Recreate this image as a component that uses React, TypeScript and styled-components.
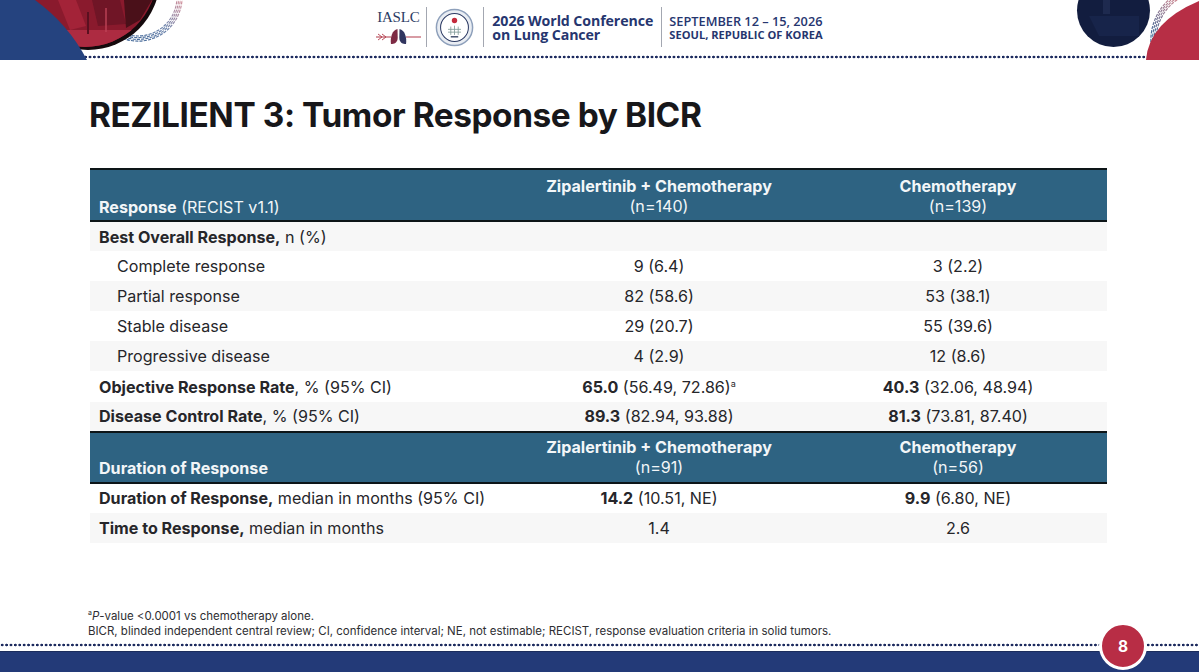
import React from "react";
import styled, { createGlobalStyle } from "styled-components";

const Global = createGlobalStyle`
  html, body { margin: 0; padding: 0; background: #fff; }
  #root { width: 1199px; height: 672px; overflow: hidden; }
`;

const dots = `radial-gradient(circle at center, #1c2a5e 0 1.25px, transparent 1.6px)`;

const Page = styled.div`
  width: 1199px;
  height: 672px;
  display: flex;
  flex-direction: column;
  position: relative;
  overflow: hidden;
  background: #fff;
  font-family: Inter, "Liberation Sans", sans-serif;
  color: #26262a;
`;

const Header = styled.header`
  height: 60px;
  flex: none;
  display: flex;
  justify-content: space-between;
  background-image: ${dots};
  background-size: 4.4px 4px;
  background-repeat: repeat-x;
  background-position: 0 55px;
`;

const Corner = styled.svg`
  display: block;
  flex: none;
  width: 190px;
  height: 60px;
`;

const Brand = styled.div`
  display: flex;
  align-items: center;
  height: 48px;
  margin-top: 3px;
`;

const Societies = styled.div`
  width: 50px;
  flex: none;
  box-sizing: border-box;
  padding-right: 6px;
  display: flex;
  flex-direction: column;
  align-items: center;
`;

const SocietyName = styled.div`
  font-family: "Liberation Serif", serif;
  font-size: 15px;
  line-height: 16px;
  color: #2b3a63;
  letter-spacing: -0.2px;
  margin-bottom: 3px;
`;

const Rule = styled.div`
  width: 1px;
  height: 40px;
  background: #a3a7b1;
  flex: none;
`;

const Seal = styled.svg`
  display: block;
  width: 39px;
  height: 39px;
  margin: 0 9px 0 8px;
  flex: none;
`;

const ConfName = styled.div`
  font-family: "Open Sans", sans-serif;
  font-weight: 700;
  font-size: 14.2px;
  line-height: 14px;
  letter-spacing: -0.1px;
  color: #26366f;
  width: 162px;
  margin: 2px 7px 0 8px;
  white-space: nowrap;
`;

const ConfDate = styled.div`
  font-family: "Open Sans", sans-serif;
  font-size: 12.75px;
  line-height: 14px;
  font-weight: 600;
  color: #26366f;
  margin: 2px 0 0 7px;
  white-space: nowrap;
`;

const ConfPlace = styled.span`
  font-size: 11.1px;
  font-weight: 700;
  display: block;
`;

const Main = styled.main`
  flex: 1;
  padding: 0 92px 0 90px;
  display: flex;
  flex-direction: column;
`;

const Title = styled.h1`
  margin: 34px 0 32px -1px;
  font-size: 33.4px;
  line-height: 42px;
  font-weight: 700;
  color: #17171a;
  letter-spacing: -0.42px;
  white-space: nowrap;
`;

const Table = styled.table`
  width: 1017px;
  border-collapse: collapse;
  table-layout: fixed;
  font-size: 16.1px;
`;

const Band = styled.tr<{ $tight?: boolean }>`
  background: #2e6382;
  color: #f2f6f8;
  th {
    padding: ${(p) => (p.$tight ? "3.5px 0 4.5px" : "4.5px 0 4.5px")};
    border-top: 2px solid #0d1518;
    border-bottom: 2px solid #0d1518;
    vertical-align: bottom;
    line-height: 20px;
    font-weight: 400;
    text-align: center;
    box-sizing: content-box;
    height: 41px;
    white-space: nowrap;
  }
  th:first-child {
    text-align: left;
    padding-left: 9px;
    padding-bottom: 3.5px;
  }
`;

const Row = styled.tr<{ $shade?: boolean; $indent?: boolean }>`
  background: ${(p) => (p.$shade ? "#f7f7f7" : "#ffffff")};
  td {
    height: 30.1px;
    padding: 0;
    text-align: center;
    box-sizing: border-box;
    white-space: nowrap;
  }
  td:first-child {
    text-align: left;
    padding-left: ${(p) => (p.$indent ? "27px" : "9px")};
  }
`;

const Sup = styled.sup`
  font-size: 9px;
  line-height: 0;
`;

const Notes = styled.div`
  margin-top: auto;
  margin-bottom: 4px;
  margin-left: -2px;
  font-size: 11.47px;
  line-height: 15px;
  color: #2e2e32;
  white-space: nowrap;
  sup { font-size: 7px; line-height: 0; }
`;

const Footer = styled.footer`
  height: 29px;
  flex: none;
  background-image: ${dots};
  background-size: 4.4px 4px;
  background-repeat: repeat-x;
  background-position: 0 0;
  display: flex;
  align-items: flex-end;
`;

const FooterBand = styled.div`
  flex: 1;
  height: 21px;
  background: #233a78;
  border-top: 1px solid #1b2c5c;
  box-sizing: border-box;
`;

const Badge = styled.div`
  position: absolute;
  left: 1099px;
  top: 622px;
  width: 48px;
  height: 48px;
  box-sizing: border-box;
  border-radius: 50%;
  border: 3px solid #fff;
  background: #b82d45;
  color: #fff;
  font-weight: 700;
  font-size: 15.5px;
  display: flex;
  align-items: center;
  justify-content: center;
`;

const hatch = (cx: number, cy: number, r: number, c: string) =>
  [0, 1.7, 3.4, 5.1].map((d) => (
    <circle key={d} cx={cx} cy={cy} r={r + d} fill="none" stroke={c} strokeWidth={1.15} strokeDasharray="3.2 1.1" />
  ));

const LeftCorner = () => (
  <Corner viewBox="0 0 190 60">
    <defs>
      <linearGradient id="ringL" gradientUnits="userSpaceOnUse" x1="130" y1="42" x2="183" y2="0">
        <stop offset="0" stopColor="#3f6596" />
        <stop offset="0.55" stopColor="#6f86ad" />
        <stop offset="1" stopColor="#d68f99" />
      </linearGradient>
      <clipPath id="redClip">
        <circle cx="85" cy="-25" r="72" />
      </clipPath>
    </defs>
    <g>{hatch(138, -3, 39, "url(#ringL)")}</g>
    <circle cx="88" cy="-22" r="72" fill="#150a0c" />
    <g clipPath="url(#redClip)">
      <rect x="0" y="-30" width="170" height="90" fill="#8a1a2d" />
      <rect x="60" y="30" width="90" height="20" fill="#ad2b41" />
      <path d="M58 0 L76 0 L86 26 L70 30 Z" fill="#a32338" />
      <path d="M92 0 L120 0 L126 24 L98 26 Z" fill="#701526" />
      <path d="M124 0 L152 0 L140 20 L126 28 Z" fill="#4a1019" />
      <rect x="87" y="12" width="2" height="22" fill="#5a1020" />
      <rect x="105" y="8" width="2" height="24" fill="#bd4357" opacity="0.7" />
    </g>
    <path d="M0 0 H35 Q 68 24 87 60 H0 Z" fill="#25437f" />
  </Corner>
);

const RightCorner = () => (
  <Corner viewBox="0 0 190 60">
    <defs>
      <linearGradient id="ringR" gradientUnits="userSpaceOnUse" x1="140" y1="35" x2="170" y2="0">
        <stop offset="0" stopColor="#3a6796" />
        <stop offset="1" stopColor="#d0868f" />
      </linearGradient>
    </defs>
    <g>{hatch(196, 40, 49, "url(#ringR)")}</g>
    <circle cx="104.5" cy="10.5" r="36.5" fill="#121d3f" />
    <path d="M80 16 H130 V36 H90 Z" fill="#1b2a52" opacity="0.6" />
    <rect x="94" y="0" width="7" height="14" fill="#26345a" opacity="0.6" />
    <path d="M137 60 Q 140 22 190 1 V60 Z" fill="#b72e45" />
  </Corner>
);

const SealIcon = () => (
  <Seal viewBox="0 0 42 42">
    <circle cx="21" cy="21" r="19.5" fill="#e9edf3" stroke="#8ea0bb" strokeWidth="1.6" />
    <circle cx="21" cy="21" r="15" fill="#fff" stroke="#2c3a63" strokeWidth="1.1" />
    <circle cx="21" cy="13.5" r="2.9" fill="#c42a3c" />
    <path d="M14 23 H28 M14 26 H28 M17 20 V29 M21 19 V29 M25 20 V29" stroke="#7f9a97" strokeWidth="0.9" fill="none" />
    <path d="M17 31 H25" stroke="#46536f" strokeWidth="1.6" />
  </Seal>
);

const LungsMark = () => (
  <svg width="45" height="17" viewBox="0 0 45 17" style={{ display: "block" }}>
    <path d="M0 9 H15 M30 9 H45" stroke="#b23b4a" strokeWidth="1.1" />
    <path d="M2 6 L6 9 L2 12 M6 6 L10 9 L6 12" stroke="#b23b4a" strokeWidth="0.9" fill="none" />
    <path d="M21.5 1 C16 2 14 10 15 16 C18 16 21.5 15 21.7 10 Z" fill="#7d2a44" />
    <path d="M23.5 1 C29 2 31 10 30 16 C27 16 23.5 15 23.3 10 Z" fill="#31355f" />
  </svg>
);

export default function App() {
  return (
    <Page>
      <Global />
      <Header>
        <LeftCorner />
        <Brand>
          <Societies>
            <SocietyName>IASLC</SocietyName>
            <LungsMark />
          </Societies>
          <Rule />
          <SealIcon />
          <Rule />
          <ConfName>
            2026 World Conference
            <br />
            on Lung Cancer
          </ConfName>
          <Rule />
          <ConfDate>
            SEPTEMBER 12 – 15, 2026
            <ConfPlace>SEOUL, REPUBLIC OF KOREA</ConfPlace>
          </ConfDate>
        </Brand>
        <RightCorner />
      </Header>
      <Main>
        <Title>REZILIENT 3: Tumor Response by BICR</Title>
        <Table>
          <colgroup>
            <col style={{ width: 419 }} />
            <col style={{ width: 300 }} />
            <col style={{ width: 298 }} />
          </colgroup>
          <tbody>
            <Band>
              <th>
                <b>Response</b> (RECIST v1.1)
              </th>
              <th>
                <b>Zipalertinib + Chemotherapy</b>
                <br />
                (n=140)
              </th>
              <th>
                <b>Chemotherapy</b>
                <br />
                (n=139)
              </th>
            </Band>
            <Row $shade>
              <td>
                <b>Best Overall Response,</b> n (%)
              </td>
              <td />
              <td />
            </Row>
            <Row $indent>
              <td>Complete response</td>
              <td>9 (6.4)</td>
              <td>3 (2.2)</td>
            </Row>
            <Row $shade $indent>
              <td>Partial response</td>
              <td>82 (58.6)</td>
              <td>53 (38.1)</td>
            </Row>
            <Row $indent>
              <td>Stable disease</td>
              <td>29 (20.7)</td>
              <td>55 (39.6)</td>
            </Row>
            <Row $shade $indent>
              <td>Progressive disease</td>
              <td>4 (2.9)</td>
              <td>12 (8.6)</td>
            </Row>
            <Row>
              <td>
                <b>Objective Response Rate</b>, % (95% CI)
              </td>
              <td>
                <b>65.0</b> (56.49, 72.86)<Sup>a</Sup>
              </td>
              <td>
                <b>40.3</b> (32.06, 48.94)
              </td>
            </Row>
            <Row $shade>
              <td>
                <b>Disease Control Rate</b>, % (95% CI)
              </td>
              <td>
                <b>89.3</b> (82.94, 93.88)
              </td>
              <td>
                <b>81.3</b> (73.81, 87.40)
              </td>
            </Row>
            <Band $tight>
              <th>
                <b>Duration of Response</b>
              </th>
              <th>
                <b>Zipalertinib + Chemotherapy</b>
                <br />
                (n=91)
              </th>
              <th>
                <b>Chemotherapy</b>
                <br />
                (n=56)
              </th>
            </Band>
            <Row>
              <td>
                <b>Duration of Response,</b> median in months (95% CI)
              </td>
              <td>
                <b>14.2</b> (10.51, NE)
              </td>
              <td>
                <b>9.9</b> (6.80, NE)
              </td>
            </Row>
            <Row $shade>
              <td>
                <b>Time to Response,</b> median in months
              </td>
              <td>1.4</td>
              <td>2.6</td>
            </Row>
          </tbody>
        </Table>
        <Notes>
          <sup>a</sup>
          <i>P</i>-value &lt;0.0001 vs chemotherapy alone.
          <br />
          BICR, blinded independent central review; CI, confidence interval; NE, not estimable; RECIST, response evaluation criteria in solid tumors.
        </Notes>
      </Main>
      <Footer>
        <FooterBand />
      </Footer>
      <Badge>8</Badge>
    </Page>
  );
}
